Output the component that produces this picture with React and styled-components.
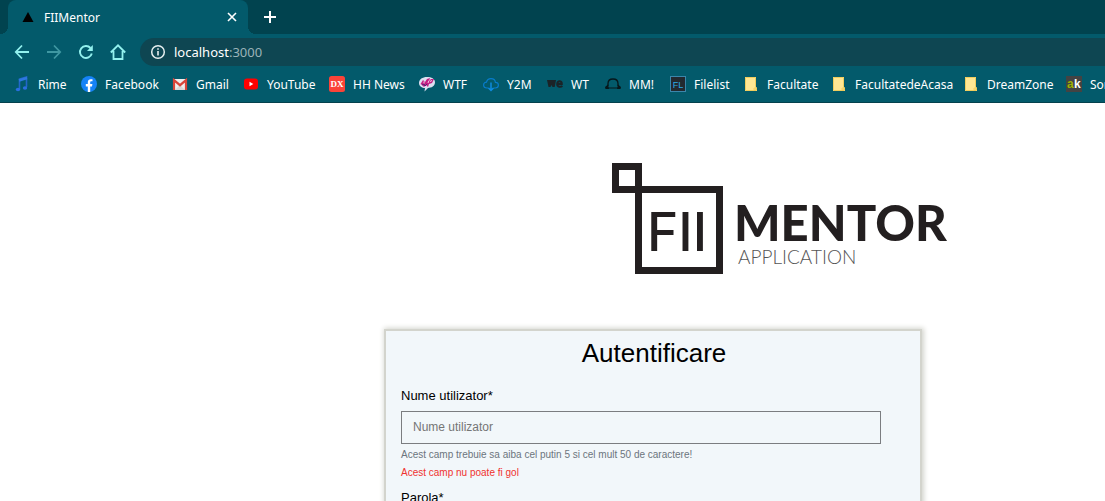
import React from "react";
import styled, { createGlobalStyle } from "styled-components";

const Global = createGlobalStyle`
  *, *::before, *::after { box-sizing: border-box; }
  body { margin: 0; background: #fff; overflow: hidden; font-family: "Liberation Sans", Arial, sans-serif; color: #000; }
`;

const ui = `"Noto Sans", "Open Sans", sans-serif`;

const Browser = styled.header`
  background: #035a6b;
  border-bottom: 1px solid #05414d;
  font-family: ${ui};
  font-size: 12px;
  color: #fff;
`;
const TabStrip = styled.div`
  display: flex;
  height: 34px;
  padding-left: 8px;
  background: #01434f;
`;
const Tab = styled.div`
  display: flex;
  align-items: center;
  width: 240px;
  padding: 0 8px 0 12px;
  border-radius: 8px 8px 0 0;
  background: #035a6b;
  position: relative;
  &::before, &::after {
    content: "";
    position: absolute;
    bottom: 0;
    width: 8px;
    height: 8px;
  }
  &::before { left: -8px; background: radial-gradient(circle at 0 0, transparent 8px, #035a6b 8px); }
  &::after { right: -8px; background: radial-gradient(circle at 100% 0, transparent 8px, #035a6b 8px); }
`;
const TabTitle = styled.span`
  flex: 1;
  padding-left: 8px;
`;
const IconButton = styled.button`
  display: flex;
  align-items: center;
  justify-content: center;
  width: ${(p) => p.$size || 32}px;
  height: ${(p) => p.$size || 32}px;
  padding: 0;
  border: 0;
  background: none;
  color: ${(p) => p.$color || "#fff"};
`;
const NewTab = styled(IconButton)`
  margin-left: 6px;
  height: 34px;
`;
const Toolbar = styled.nav`
  display: flex;
  align-items: center;
  height: 36px;
  padding-left: 6px;
`;
const Address = styled.div`
  display: flex;
  align-items: center;
  flex: 1;
  height: 28px;
  margin-left: 6px;
  padding-left: 10px;
  gap: 8px;
  border-radius: 14px 0 0 14px;
  background: #0e4652;
`;
const Url = styled.a`
  color: #fff;
  text-decoration: none;
  font-size: 13px;
`;
const Port = styled.span`
  color: #9bb3b8;
`;
const Bookmarks = styled.nav`
  display: flex;
  height: 32px;
  padding: 0 0 4px 14px;
  align-items: center;
  overflow: hidden;
`;
const Bookmark = styled.a`
  display: flex;
  align-items: center;
  gap: 8px;
  flex: none;
  width: ${(p) => p.$width}px;
  color: #fff;
  text-decoration: none;
  white-space: nowrap;
  svg { flex: none; }
`;

const Page = styled.main`
  padding: 59px 0 0 384px;
`;
const Logo = styled.div`
  display: flex;
  width: max-content;
  margin-left: 227px;
  color: #231f20;
`;
const Mark = styled.div`
  display: grid;
  grid-template: 100% / 100%;
  width: 112px;
  height: 113px;
  svg, span { grid-area: 1 / 1; }
`;
const MarkText = styled.span`
  padding: 38px 0 0 36px;
  font-family: Inter, sans-serif;
  font-size: 53px;
  line-height: 64px;
  font-weight: 500;
`;
const Wordmark = styled.div`
  padding: 35px 0 0 11px;
  font-family: Lato, sans-serif;
`;
const Mentor = styled.div`
  font-size: 49px;
  line-height: 50px;
  font-weight: 900;
`;
const Application = styled.div`
  padding-left: 4px;
  font-size: 19px;
  line-height: 20px;
  font-weight: 300;
  color: #555;
`;
const Card = styled.form`
  max-width: 538px;
  margin-top: 54px;
  padding: 7px 39px 40px 15px;
  border: 2px solid #d3d4cd;
  background: #f2f7fa;
  box-shadow: 1px 0 5px 1px #d3d4cd;
`;
const Title = styled.h1`
  margin: 0 -26px 20px 0;
  font-size: 26px;
  line-height: 30px;
  font-weight: 400;
  text-align: center;
`;
const Field = styled.div`
  display: flex;
  flex-direction: column;
  margin-bottom: 8px;
`;
const Label = styled.label`
  margin-bottom: 7px;
  font-size: 13px;
  line-height: 16px;
`;
const Input = styled.input`
  height: 33px;
  padding: 0 11px 2px;
  border: 1px solid #7b7d80;
  border-radius: 0;
  background: transparent;
  font: 12px "Liberation Sans", Arial, sans-serif;
  margin-bottom: 2px;
  &::placeholder { color: #757575; opacity: 1; }
`;
const Hint = styled.small`
  font-size: 10px;
  line-height: 18px;
  color: ${(p) => (p.$error ? "#f0322f" : "#6c757d")};
`;

const Svg = ({ size = 16, box = 16, children, ...rest }) => (
  <svg width={size} height={size} viewBox={`0 0 ${box} ${box}`} fill="none" aria-hidden="true" {...rest}>
    {children}
  </svg>
);

const icons = {
  music: (
    <Svg>
      <path d="M5.500 13V3l7-2v10" stroke="#2267c9" strokeWidth="1.600" />
      <path d="M5 4.500l8-2.500" stroke="#2d78e0" strokeWidth="2.500" />
      <ellipse cx="4" cy="13.500" rx="2.200" ry="1.800" fill="#2a6fe0" />
      <ellipse cx="11" cy="12" rx="2.200" ry="1.800" fill="#2a6fe0" />
    </Svg>
  ),
  facebook: (
    <Svg>
      <circle cx="8" cy="8" r="8" fill="#1583f7" />
      <path d="M6.800 16v-5.600H4.800V8.100h2V6.400c0-2 1.200-3.200 3-3.200l1.700.1v2h-1c-1 0-1.300.5-1.300 1.200v1.600h2.200l-.4 2.300H9.200V16z" fill="#fff" />
    </Svg>
  ),
  gmail: (
    <Svg>
      <path d="M1 3h14v11H1z" fill="#efefef" />
      <path d="M3 14l5-5 5 5" fill="#d8d8d8" />
      <path d="M2 14V4.200l6 5 6-5V14" stroke="#d9453a" strokeWidth="2.200" />
    </Svg>
  ),
  youtube: (
    <Svg>
      <rect x="1" y="2.500" width="14" height="11" rx="3" fill="#f00" />
      <path d="M6.500 5.800v4.400L10.300 8z" fill="#fff" />
    </Svg>
  ),
  dx: (
    <Svg>
      <rect width="16" height="16" rx="2.500" fill="#fb4338" />
      <text x="8" y="11" textAnchor="middle" fontFamily="Liberation Serif, serif" fontWeight="700" fontSize="9" fill="#fff">DX</text>
    </Svg>
  ),
  wtf: (
    <Svg>
      <path d="M8 1c4.500 0 8 1.900 8 5.300 0 3.700-3.500 5.700-7 5.700l-3.500 3.500.5-3.500C3 12 0 10.500 0 7 0 3.200 3.500 1 8 1z" fill="#dcdff0" />
      <path d="M1.500 8l2.500-4 2 2 2-3 3-1-1 3 2-2h3l-2 4-3 1-1 3-2-2-2 2-2-2z" fill="#c41e83" />
      <path d="M3 9l2-1 1 2 2-2" stroke="#552572" />
      <path d="M10 4.500l-1 2.500M13 4.500l-2 1M5 5.500v2" stroke="#fff" strokeWidth=".8" />
    </Svg>
  ),
  y2m: (
    <Svg>
      <path d="M5.500 12H4C2 12 .6 10.700.6 9S2 6.200 3.500 6.200C4 4 5.700 2.600 8 2.600s4.200 1.500 4.400 3.700c1.800 0 3 1.200 3 2.800S14 12 12.300 12h-1.800" stroke="#087ccb" strokeWidth="1.200" />
      <path d="M8 6.500v8M5.500 12L8 14.500l2.500-2.500" stroke="#0e8be0" strokeWidth="1.500" />
    </Svg>
  ),
  we: (
    <Svg>
      <path d="M0 4h9l-1.300 7H5.500l-1-2-1 2H1.500z" fill="#1b2327" />
      <path d="M10.500 8h4.300c0-3.600-4.600-3.600-4.600 0s3.800 3 5.200 2" stroke="#1b2327" strokeWidth="2" />
    </Svg>
  ),
  headphones: (
    <Svg>
      <path d="M3 10V7.500C3 4.500 5 3 8 3s5 1.500 5 4.500V10" stroke="#06171b" strokeWidth="1.300" />
      <path d="M0 11L3 8.500 4 13H.5zM16 11l-3-2.500L12 13h3.500z" fill="#06171b" />
      <path d="M3 12h10" stroke="#06171b" />
    </Svg>
  ),
  filelist: (
    <Svg>
      <rect x=".5" y=".5" width="15" height="15" fill="#23292f" stroke="#3b86ab" />
      <text x="8" y="11.500" textAnchor="middle" fontFamily="Liberation Sans, sans-serif" fontSize="9" fill="#2caae8">FL</text>
    </Svg>
  ),
  folder: (
    <Svg>
      <path d="M2 1h11v10l1 1v3H2z" fill="#ffe693" />
      <path d="M2.500 1.500h10v9l1 2v2h-11z" stroke="#f0cd5d" />
      <path d="M11 12h2v2h-2z" stroke="#e5b93c" strokeWidth=".5" />
    </Svg>
  ),
  ak: (
    <Svg>
      <rect width="16" height="16" fill="#434343" />
      <text x="1" y="12" fontFamily="Liberation Sans, sans-serif" fontWeight="700" fontSize="12" fill="#9db000">a</text>
      <text x="8" y="12" fontFamily="Liberation Sans, sans-serif" fontWeight="700" fontSize="12" fill="#fff">k</text>
    </Svg>
  ),
};

const bookmarks = [
  ["Rime", "music", 67],
  ["Facebook", "facebook", 91],
  ["Gmail", "gmail", 71],
  ["YouTube", "youtube", 86],
  ["HH News", "dx", 90],
  ["WTF", "wtf", 64],
  ["Y2M", "y2m", 64],
  ["WT", "we", 58],
  ["MM!", "headphones", 65],
  ["Filelist", "filelist", 73],
  ["Facultate", "folder", 88],
  ["FacultatedeAcasa", "folder", 132],
  ["DreamZone", "folder", 103],
  ["Songs", "ak", 75],
];

export default function App() {
  return (
    <>
      <Global />
      <Browser>
        <TabStrip>
          <Tab>
            <Svg><path d="M8 3l5.500 10h-11z" fill="#000" /></Svg>
            <TabTitle>FIIMentor</TabTitle>
            <IconButton $size={16} aria-label="Close tab">
              <Svg><path d="M4 4l8 8M12 4l-8 8" stroke="currentColor" strokeWidth="1.600" /></Svg>
            </IconButton>
          </Tab>
          <NewTab aria-label="New tab">
            <Svg><path d="M8 2v12M2 8h12" stroke="currentColor" strokeWidth="2" /></Svg>
          </NewTab>
        </TabStrip>
        <Toolbar>
          <IconButton $color="#93f1ee" aria-label="Back">
            <Svg><path d="M15 8H2M8 1.500L1.800 8 8 14.500" stroke="currentColor" strokeWidth="1.800" /></Svg>
          </IconButton>
          <IconButton $color="#3f97a2" aria-label="Forward">
            <Svg><path d="M1 8h13M8 1.500L14.200 8 8 14.500" stroke="currentColor" strokeWidth="1.800" /></Svg>
          </IconButton>
          <IconButton $color="#93f1ee" aria-label="Reload">
            <Svg>
              <path d="M13.800 9.500A6 6 0 1 1 12.500 4" stroke="currentColor" strokeWidth="1.900" />
              <path d="M14.800 1v6H9z" fill="currentColor" />
            </Svg>
          </IconButton>
          <IconButton $color="#93f1ee" aria-label="Home">
            <Svg><path d="M.8 8.500L8 1.300l7.200 7.200M3.500 7v8h9V7" stroke="currentColor" strokeWidth="1.800" /></Svg>
          </IconButton>
          <Address>
            <Svg>
              <circle cx="8" cy="8" r="6.300" stroke="#e6eff0" strokeWidth="1.500" />
              <path d="M8 7v4.500M8 4.200v1.600" stroke="#e6eff0" strokeWidth="1.600" />
            </Svg>
            <Url href="#">localhost<Port>:3000</Port></Url>
          </Address>
        </Toolbar>
        <Bookmarks>
          {bookmarks.map(([name, icon, width]) => (
            <Bookmark href="#" key={name} $width={width}>{icons[icon]}{name}</Bookmark>
          ))}
        </Bookmarks>
      </Browser>
      <Page>
        <Logo>
          <Mark>
            <svg viewBox="0 0 112 113" fill="none" stroke="#231f20" strokeWidth="7" aria-hidden="true">
              <path d="M4.500 4.500h23v23h-23z" />
              <path d="M27.500 27.500h81v81h-81z" />
            </svg>
            <MarkText>FII</MarkText>
          </Mark>
          <Wordmark>
            <Mentor>MENTOR</Mentor>
            <Application>APPLICATION</Application>
          </Wordmark>
        </Logo>
        <Card>
          <Title>Autentificare</Title>
          <Field>
            <Label htmlFor="user">Nume utilizator*</Label>
            <Input id="user" placeholder="Nume utilizator" />
            <Hint>Acest camp trebuie sa aiba cel putin 5 si cel mult 50 de caractere!</Hint>
            <Hint $error>Acest camp nu poate fi gol</Hint>
          </Field>
          <Field>
            <Label htmlFor="password">Parola*</Label>
            <Input id="password" type="password" placeholder="Parola" />
          </Field>
        </Card>
      </Page>
    </>
  );
}
